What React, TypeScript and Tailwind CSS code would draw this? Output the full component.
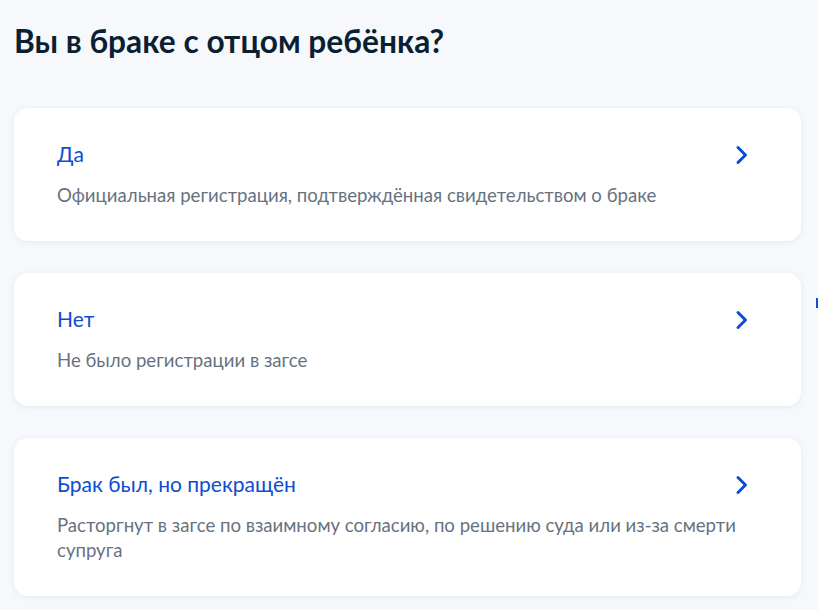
import React from "react";

const items = [
  { title: "Да", desc: "Официальная регистрация, подтверждённая свидетельством о браке" },
  { title: "Нет", desc: "Не было регистрации в загсе" },
  {
    title: "Брак был, но прекращён",
    desc: "Расторгнут в загсе по взаимному согласию, по решению суда или из-за смерти супруга",
  },
];

function Chevron() {
  return (
    <svg width="14" height="20" viewBox="0 0 14 20" fill="none" className="shrink-0 mt-[5px]">
      <path d="M3 2.5 L10.5 10 L3 17.5" stroke="#0d4cd3" strokeWidth="3" strokeLinecap="round" strokeLinejoin="round" />
    </svg>
  );
}

export default function App() {
  return (
    <div
      className="relative w-[818px] h-[610px] overflow-hidden bg-[#f6f8fc] pl-[14px] pr-[17px] pt-[21px]"
      style={{ fontFamily: "Lato, 'Noto Sans', sans-serif" }}
    >
      <h1 className="text-[31.7px] leading-[40px] font-bold text-[#0b1f33] mb-[47px]">Вы в браке с отцом ребёнка?</h1>
      <div className="flex flex-col gap-[32px]">
        {items.map((it) => (
          <div
            key={it.title}
            className="bg-white rounded-[14px] shadow-[0_1px_6px_rgba(100,120,160,0.12)] pl-[43px] pr-[52px] pt-[32px] pb-[33px]"
          >
            <div className="flex items-start justify-between">
              <div className="text-[21px] leading-[28px] text-[#0d4cd3]">{it.title}</div>
              <Chevron />
            </div>
            <div className="mt-[15px] text-[18.6px] leading-[25px] text-[#66727f]">{it.desc}</div>
          </div>
        ))}
      </div>
      <div className="absolute right-0 top-[298px] w-[2px] h-[10px] bg-[#0d4cd3]" />
    </div>
  );
}
